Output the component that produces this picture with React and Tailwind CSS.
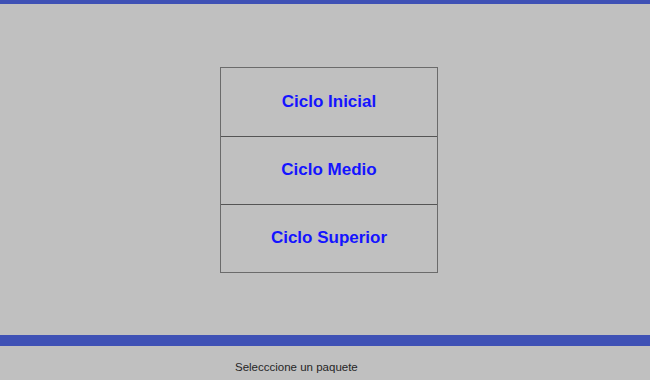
export default function App() {
  const items = ["Ciclo Inicial", "Ciclo Medio", "Ciclo Superior"];
  return (
    <div className="w-[650px] h-[380px] bg-[#c0c0c0] flex flex-col overflow-hidden" style={{ fontFamily: '"Liberation Sans", Arial, sans-serif' }}>
      <div className="h-[4px] bg-[#3f51b5] shrink-0" />
      <div className="h-[331px] flex items-center justify-center pl-[8px] shrink-0">
        <div className="w-[218px] border border-[#6b6b6b] flex flex-col">
          {items.map((t, i) => (
            <div key={t} className={`h-[68px] flex items-center justify-center text-[17px] leading-[20px] font-bold text-[#1414ff] ${i > 0 ? "border-t border-[#555555]" : ""}`}>
              {t}
            </div>
          ))}
        </div>
      </div>
      <div className="h-[11px] bg-[#3f51b5] shrink-0" />
      <div className="pl-[235px] pt-[14px] text-[11.5px] leading-[14px] text-[#262626]">Selecccione un paquete</div>
    </div>
  );
}
